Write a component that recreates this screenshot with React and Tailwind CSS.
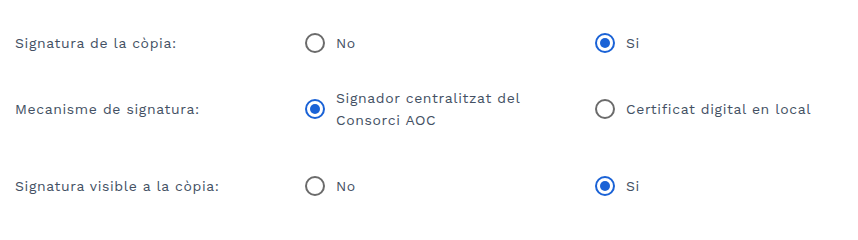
import { useState } from 'react';

const ROWS = [
  {
    id: 'copia',
    label: 'Signatura de la còpia:',
    options: ['No', 'Si'],
    value: 'Si',
    cls: 'pt-[32px]',
  },
  {
    id: 'mecanisme',
    label: 'Mecanisme de signatura:',
    options: ['Signador centralitzat del Consorci AOC', 'Certificat digital en local'],
    value: 'Signador centralitzat del Consorci AOC',
    cls: 'pt-[33px]',
  },
  {
    id: 'visible',
    label: 'Signatura visible a la còpia:',
    options: ['No', 'Si'],
    value: 'Si',
    cls: 'pt-[44px]',
  },
];

function Radio({ checked, label, onChange }) {
  return (
    <label className="flex cursor-pointer items-center gap-[11px]">
      <span
        className={`flex h-[20px] w-[20px] shrink-0 items-center justify-center rounded-full border-2 ${
          checked ? 'border-[#1a62d6]' : 'border-[#6b6b6b]'
        }`}
      >
        {checked && <span className="h-[10px] w-[10px] rounded-full bg-[#1a62d6]" />}
      </span>
      <span className="max-w-[210px] text-[14px] leading-[22px] tracking-[0.045em] text-[#435063]">
        {label}
      </span>
      <input type="radio" className="hidden" checked={checked} onChange={onChange} />
    </label>
  );
}

export default function App() {
  const [values, setValues] = useState(
    Object.fromEntries(ROWS.map((r) => [r.id, r.value]))
  );

  return (
    <div
      className="h-[238px] w-[858px] bg-white pl-[15px]"
      style={{ fontFamily: '"Work Sans", Inter, "Noto Sans", sans-serif' }}
    >
      {ROWS.map((row) => (
        <div
          key={row.id}
          className={`grid grid-cols-[290px_290px_1fr] items-center ${row.cls}`}
        >
          <span className="text-[14px] leading-[22px] tracking-[0.045em] text-[#435063]">
            {row.label}
          </span>
          {row.options.map((opt) => (
            <Radio
              key={opt}
              label={opt}
              checked={values[row.id] === opt}
              onChange={() => setValues({ ...values, [row.id]: opt })}
            />
          ))}
        </div>
      ))}
    </div>
  );
}
